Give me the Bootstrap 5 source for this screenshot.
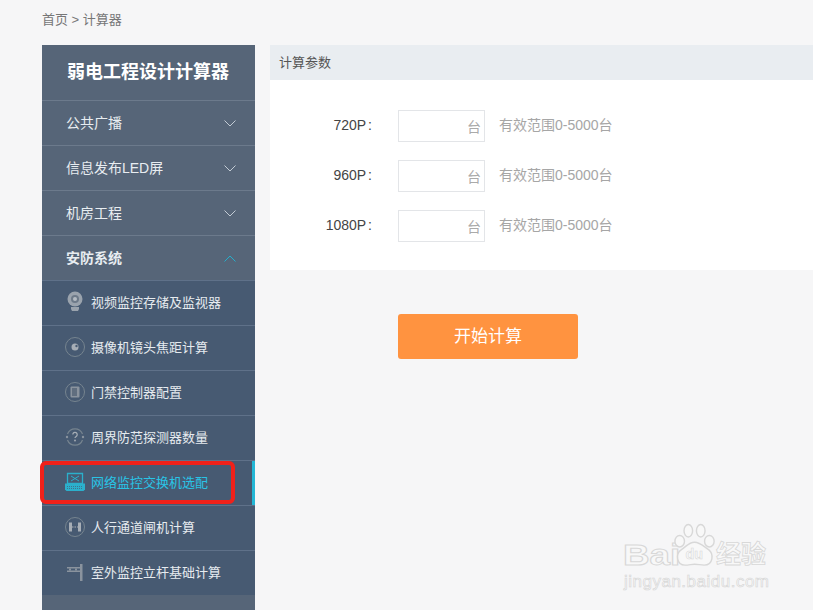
<!doctype html>
<html lang="en">
<head>
  <meta charset="utf-8">
  <meta name="viewport" content="width=device-width, initial-scale=1">
  <title>计算器</title>
  <link href="https://cdn.jsdelivr.net/npm/bootstrap@5.3.5/dist/css/bootstrap.min.css" rel="stylesheet">
  <style>
    html, body { height: 610px; overflow: hidden; }
    body {
      background: #f6f6f7;
      font-family: "Liberation Sans", "Noto Sans CJK SC", sans-serif;
      font-size: 14px;
      color: #333;
      position: relative;
    }
    .crumbs { height: 45px; padding: 11px 0 0 42px; font-size: 13px; line-height: 17px; color: #777; }
    .page-body { padding-left: 42px; gap: 15px; }
    .side { width: 213px; height: 565px; background: #475a72; flex: none; }
    .side-title { height: 55px; background: #566578; color: #fff; font-size: 18px; font-weight: 700; line-height: 54px; padding-left: 25px; }
    .side-top { height: 45px; background: #566578; border-top: 1px solid #6c7a8c; color: #e8edf1; padding: 0 19px 0 24px; }
    .side-top.is-open { font-weight: 700; }
    .side-sub { height: 45px; border-top: 1px solid #5f7189; color: #e6ebef; font-size: 13px; padding-left: 22px; gap: 5px; position: relative; }
    .side-sub.is-current { color: #29c4e6; }
    .side-sub.is-current::after { content: ""; position: absolute; right: 0; top: 0; bottom: 0; width: 3px; background: #23b7d6; }
    .side-rest { height: 15px; background: #566578; }
    .ico { width: 22px; height: 22px; flex: none; margin-top: -2px; }
    .chev { width: 12px; height: 7px; }
    .red-frame { position: absolute; left: 40px; top: 461px; width: 195px; height: 43px; border: 4px solid #f0211a; border-radius: 6px; }
    .main-col { flex: 1 1 0; min-width: 0; }
    .panel { background: #fff; height: 225px; }
    .panel-head { height: 35px; background: #e9edf1; color: #555; font-size: 13px; line-height: 35px; padding-left: 9px; }
    .panel-rows { padding-top: 30px; gap: 18px; }
    .param-row { height: 32px; }
    .param-label { width: 102px; text-align: right; color: #444; font-size: 14px; padding-bottom: 1px; }
    .param-colon { margin-left: 2px; }
    .param-box { width: 87px; height: 32px; margin-left: 26px; border: 1px solid #e3e5e8; color: #aaa; font-size: 14px; padding: 3px 3px 0 0; text-align: right; line-height: 26px; }
    .param-hint { margin-left: 14px; color: #a6a6a6; font-size: 14px; padding-bottom: 1px; }
    .go-btn { width: 180px; height: 45px; margin: 44px 0 0 128px; background: #ff9340; color: #fff; font-size: 17px; border: 0; border-radius: 3px; }
    .go-btn:hover { background: #ff9340; color: #fff; }
    .stamp { position: absolute; left: 622px; top: 522px; width: 150px; height: 74px; }
    .stamp-word { position: absolute; left: 1px; top: 18px; font-size: 29px; font-weight: 700; line-height: 30px; transform: scaleX(1.27); transform-origin: left; color: #f8f8f8; -webkit-text-stroke: 1px #d8d8d8; }
    .stamp-cn { position: absolute; left: 94px; top: 17px; font-size: 25px; line-height: 30px; font-weight: 700; color: #f8f8f8; -webkit-text-stroke: .8px #d8d8d8; white-space: nowrap; }
    .stamp-url { position: absolute; left: 2px; top: 50px; font-size: 17px; line-height: 20px; letter-spacing: .5px; color: #f8f8f8; -webkit-text-stroke: .6px #d5d5d5; white-space: nowrap; }
    .stamp-paw { position: absolute; left: 51px; top: 1px; width: 44px; height: 46px; }
    .stamp-du { font-size: 15px; font-weight: 700; fill: #f8f8f8; stroke: #d8d8d8; stroke-width: .6px; }
  </style>
</head>
<body>
  <div class="crumbs">首页 &gt; 计算器</div>
  <div class="page-body d-flex align-items-start">
    <div class="side">
      <div class="side-title">弱电工程设计计算器</div>
      <div class="side-top d-flex align-items-center justify-content-between">公共广播
        <svg class="chev" viewBox="0 0 12 7" fill="none" stroke="#c3ccd5"><path d="M.5.5 6 6l5.500-5.500"/></svg></div>
      <div class="side-top d-flex align-items-center justify-content-between">信息发布LED屏
        <svg class="chev" viewBox="0 0 12 7" fill="none" stroke="#c3ccd5"><path d="M.5.5 6 6l5.500-5.500"/></svg></div>
      <div class="side-top d-flex align-items-center justify-content-between">机房工程
        <svg class="chev" viewBox="0 0 12 7" fill="none" stroke="#c3ccd5"><path d="M.5.5 6 6l5.500-5.500"/></svg></div>
      <div class="side-top is-open d-flex align-items-center justify-content-between">安防系统
        <svg class="chev" viewBox="0 0 12 7" fill="none" stroke="#25aecb"><path d="M.5 6.500 6 1l5.500 5.500"/></svg></div>

      <div class="side-sub d-flex align-items-center">
        <svg class="ico" viewBox="0 0 22 22"><circle cx="11" cy="8" r="7.500" fill="#9aa3ad"/><circle cx="11" cy="8" r="4" fill="#6d7a89"/><circle cx="11" cy="8" r="2" fill="#b4bbc3"/><path d="M7 16h8v2l-1 2H8l-1-2z" fill="#9aa3ad"/></svg>
        视频监控存储及监视器</div>
      <div class="side-sub d-flex align-items-center">
        <svg class="ico" viewBox="0 0 22 22"><circle cx="11" cy="11" r="9.500" fill="none" stroke="#76848f"/><circle cx="11" cy="11" r="3.500" fill="#a7aeb6"/><circle cx="12.500" cy="10" r="1.200" fill="#475a72"/></svg>
        摄像机镜头焦距计算</div>
      <div class="side-sub d-flex align-items-center">
        <svg class="ico" viewBox="0 0 22 22"><circle cx="11" cy="11" r="9.500" fill="none" stroke="#76848f"/><rect x="6.500" y="5.500" width="9" height="11" rx="1" fill="#8a939e"/><rect x="8" y="7" width="5" height="8" fill="#606e7f"/></svg>
        门禁控制器配置</div>
      <div class="side-sub d-flex align-items-center">
        <svg class="ico" viewBox="0 0 22 22"><path d="M3.500 8a8 8 0 0 1 15 0M3.500 14a8 8 0 0 0 15 0" fill="none" stroke="#76848f" stroke-width="1.200"/><path d="M8.800 8.500a2.200 2.200 0 1 1 3.400 1.900c-.8.500-1.200.9-1.200 1.700" fill="none" stroke="#a7aeb6" stroke-width="1.200"/><circle cx="11" cy="14.500" r=".9" fill="#a7aeb6"/><circle cx="3" cy="11" r="1.200" fill="#8a939e"/><circle cx="19" cy="11" r="1.200" fill="#8a939e"/></svg>
        周界防范探测器数量</div>
      <div class="side-sub is-current d-flex align-items-center">
        <svg class="ico" viewBox="0 0 22 22"><path d="M3.500 2.500h15v10h-15z" fill="none" stroke="#2bb0cc" stroke-width="1.300"/><path d="M7 5l8 5M15 5l-8 5" stroke="#2bb0cc"/><path d="M1 12.500h20v6l-1.500 1.500h-17L1 18.500z" fill="#2bb0cc"/><path d="M3 15.500h16M3 17.500h16" stroke="#475a72" stroke-width=".7" stroke-dasharray="1 1"/></svg>
        网络监控交换机选配</div>
      <div class="side-sub d-flex align-items-center">
        <svg class="ico" viewBox="0 0 22 22"><circle cx="11" cy="11" r="9.500" fill="none" stroke="#76848f"/><rect x="5" y="6.500" width="3" height="9" fill="#a7aeb6"/><rect x="14" y="6.500" width="3" height="9" fill="#a7aeb6"/><path d="M8 11h6" stroke="#8a939e" stroke-width="1.500" stroke-dasharray="1.500 1"/></svg>
        人行通道闸机计算</div>
      <div class="side-sub d-flex align-items-center">
        <svg class="ico" viewBox="0 0 22 22"><rect x="16" y="3" width="2.500" height="17" fill="#8a939e"/><rect x="3" y="6" width="13" height="1.500" fill="#8a939e"/><rect x="3" y="9.500" width="13" height="1.500" fill="#8a939e"/><rect x="5" y="7.500" width="2" height="2" fill="#8a939e"/><rect x="11" y="7.500" width="2" height="2" fill="#8a939e"/></svg>
        室外监控立杆基础计算</div>
      <div class="side-rest"></div>
    </div>

    <div class="main-col">
      <div class="panel">
        <div class="panel-head">计算参数</div>
        <div class="panel-rows d-flex flex-column">
          <div class="param-row d-flex align-items-center">
            <div class="param-label">720P<span class="param-colon">:</span></div><div class="param-box">台</div><div class="param-hint">有效范围0-5000台</div>
          </div>
          <div class="param-row d-flex align-items-center">
            <div class="param-label">960P<span class="param-colon">:</span></div><div class="param-box">台</div><div class="param-hint">有效范围0-5000台</div>
          </div>
          <div class="param-row d-flex align-items-center">
            <div class="param-label">1080P<span class="param-colon">:</span></div><div class="param-box">台</div><div class="param-hint">有效范围0-5000台</div>
          </div>
        </div>
      </div>
      <button type="button" class="btn go-btn d-block">开始计算</button>
    </div>
  </div>

  <div class="red-frame"></div>

  <div class="stamp">
    <div class="stamp-word">Bai</div>
    <svg class="stamp-paw" viewBox="0 0 46 48" fill="#f8f8f8" stroke="#d8d8d8" stroke-width="1.500">
      <ellipse cx="7" cy="19" rx="5" ry="6"/><ellipse cx="16" cy="8" rx="4.500" ry="6.500"/><ellipse cx="29" cy="8" rx="4.500" ry="6.500"/><ellipse cx="38" cy="19" rx="5" ry="6"/>
      <path d="M22.500 20c6 0 9 4 15 8 5 4 5 16-5 16-3 0-7-1-10-1s-6 1-10 1c-9 0-10-12-4-16 6-4 8-8 14-8z"/>
      <text class="stamp-du" x="13" y="38">du</text>
    </svg>
    <div class="stamp-cn">经验</div>
    <div class="stamp-url">jingyan.baidu.com</div>
  </div>

  <script src="https://cdn.jsdelivr.net/npm/bootstrap@5.3.5/dist/js/bootstrap.bundle.min.js"></script>
</body>
</html>
